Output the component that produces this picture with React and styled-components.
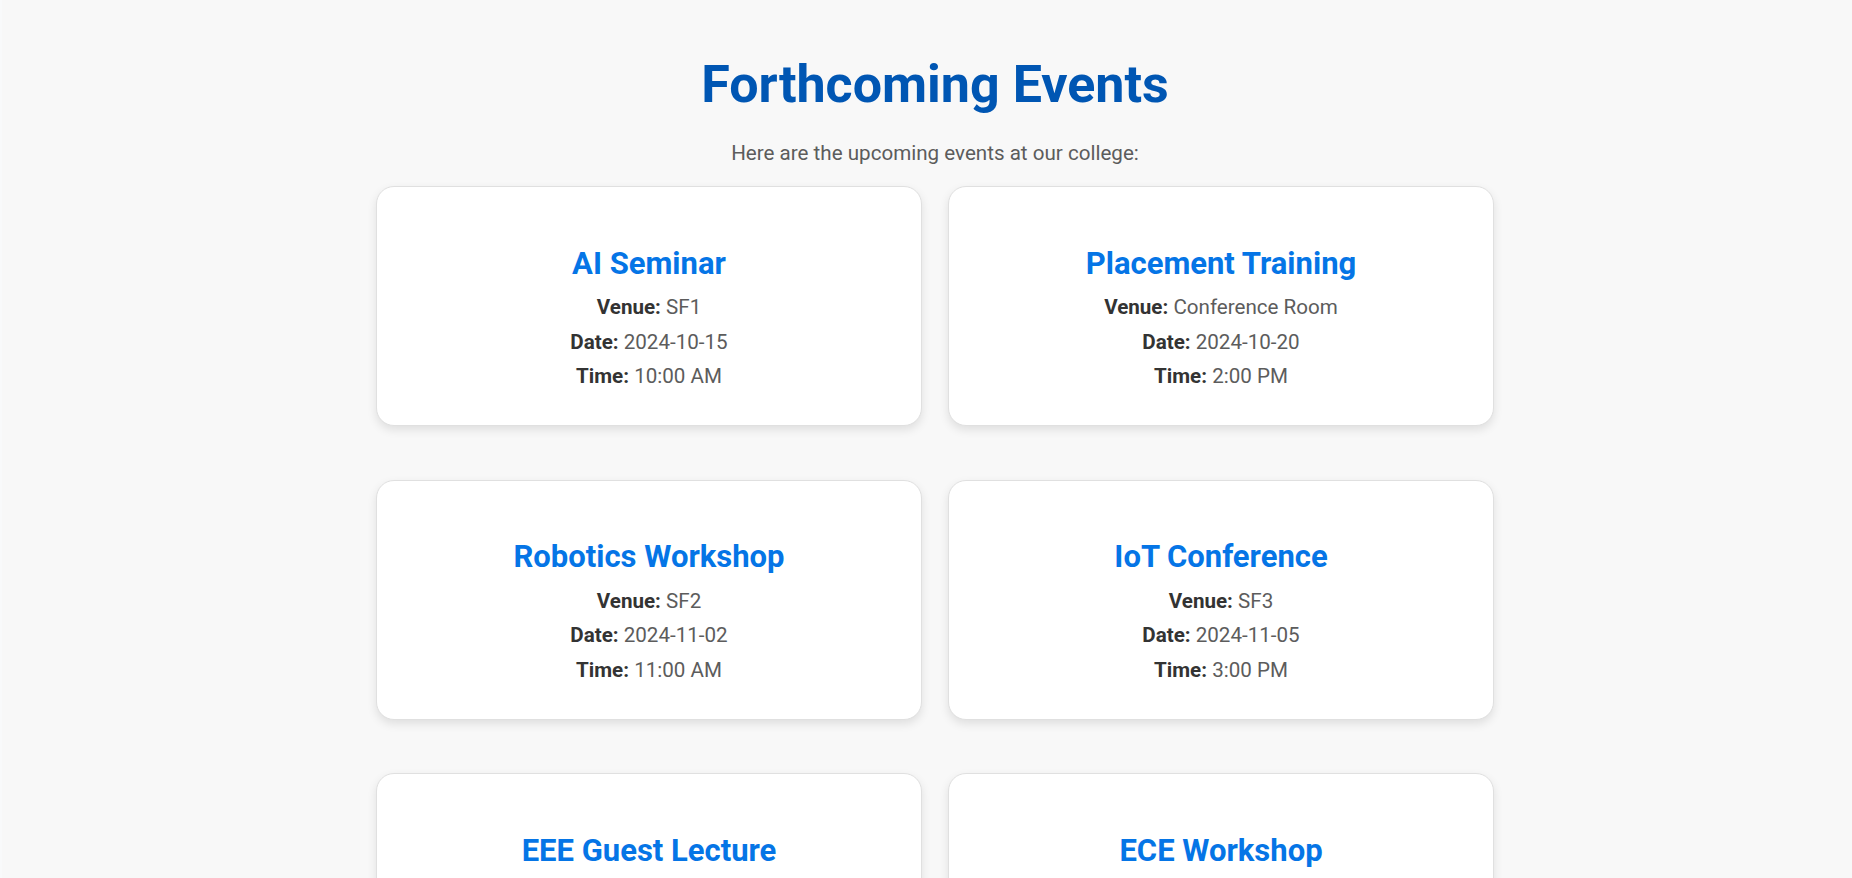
import React from "react";
import styled, { createGlobalStyle } from "styled-components";

const GlobalStyle = createGlobalStyle`
  body {
    margin: 0;
    background: #f9fafb;
    font-family: Roboto, "Liberation Sans", Arial, sans-serif;
  }
`;

const Page = styled.main`
  min-height: 100vh;
  margin-left: 2px;
  padding: 54px 0 40px 16px;
  background: #f8f8f8;
  box-sizing: border-box;
  text-align: center;
`;

const Heading = styled.h1`
  margin: 0;
  font-size: 52px;
  font-weight: 700;
  line-height: normal;
  color: #0056b3;
`;

const Intro = styled.p`
  margin: 26px 0 21px;
  font-size: 20.6px;
  line-height: normal;
  color: #5c5c5c;
`;

const EventGrid = styled.section`
  display: grid;
  grid-template-columns: repeat(2, 546px);
  justify-content: center;
  column-gap: 26px;
  row-gap: 53.5px;
`;

const Card = styled.article`
  height: 240px;
  box-sizing: border-box;
  padding: 57.5px 20px 30px;
  background: #ffffff;
  border: 1px solid #e0e0e0;
  border-radius: 18px;
  box-shadow: 0 4px 10px rgba(0, 0, 0, 0.1);
`;

const CardTitle = styled.h2`
  margin: 0 0 8.8px;
  font-size: 31px;
  font-weight: 700;
  line-height: normal;
  color: #0575e6;
`;

const Detail = styled.p`
  margin: 0;
  font-size: 20.6px;
  line-height: 34.6px;
  color: #5c5c5c;

  strong {
    color: #333333;
    font-weight: 700;
  }
`;

const events = [
  { name: "AI Seminar", venue: "SF1", date: "2024-10-15", time: "10:00 AM" },
  { name: "Placement Training", venue: "Conference Room", date: "2024-10-20", time: "2:00 PM" },
  { name: "Robotics Workshop", venue: "SF2", date: "2024-11-02", time: "11:00 AM" },
  { name: "IoT Conference", venue: "SF3", date: "2024-11-05", time: "3:00 PM" },
  { name: "EEE Guest Lecture", venue: "Seminar Hall", date: "2024-11-12", time: "10:30 AM" },
  { name: "ECE Workshop", venue: "SF4", date: "2024-11-18", time: "1:00 PM" },
];

export default function App() {
  return (
    <>
      <GlobalStyle />
      <Page>
        <Heading>Forthcoming Events</Heading>
        <Intro>Here are the upcoming events at our college:</Intro>
        <EventGrid>
          {events.map((ev) => (
            <Card key={ev.name}>
              <CardTitle>{ev.name}</CardTitle>
              <Detail><strong>Venue:</strong> {ev.venue}</Detail>
              <Detail><strong>Date:</strong> {ev.date}</Detail>
              <Detail><strong>Time:</strong> {ev.time}</Detail>
            </Card>
          ))}
        </EventGrid>
      </Page>
    </>
  );
}
